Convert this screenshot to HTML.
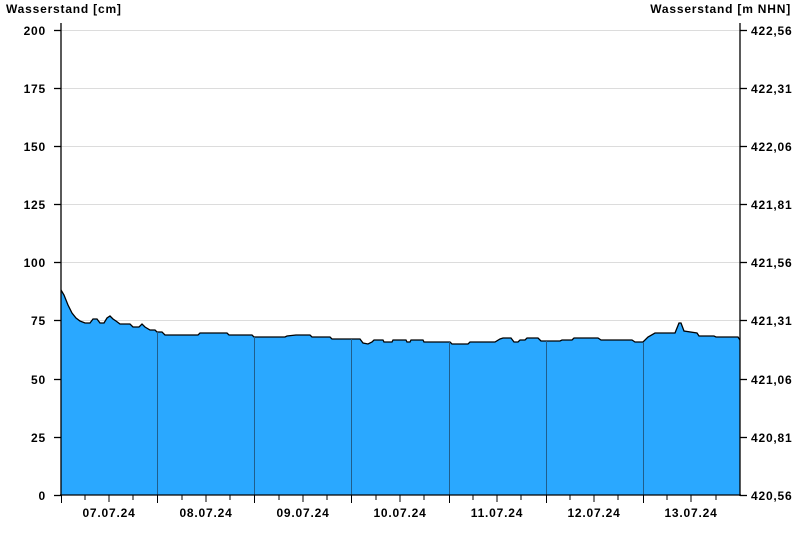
<!DOCTYPE html>
<html><head><meta charset="utf-8"><style>
html,body{margin:0;padding:0;background:#fff;}
svg{display:block;font-family:"Liberation Sans",Arial,sans-serif;font-weight:bold;font-size:12px;letter-spacing:0.8px;}
</style></head><body>
<svg width="800" height="550" viewBox="0 0 800 550" xmlns="http://www.w3.org/2000/svg">
<text x="6" y="13" fill="#000">Wasserstand [cm]</text>
<text x="791" y="13" fill="#000" text-anchor="end">Wasserstand [m NHN]</text>
<g stroke="#dcdcdc" stroke-width="1">
<line x1="61" y1="30.5" x2="740" y2="30.5"/><line x1="61" y1="88.5" x2="740" y2="88.5"/>
<line x1="61" y1="146.5" x2="740" y2="146.5"/><line x1="61" y1="204.5" x2="740" y2="204.5"/>
<line x1="61" y1="262.5" x2="740" y2="262.5"/><line x1="61" y1="320.5" x2="740" y2="320.5"/>
<line x1="61" y1="379.5" x2="740" y2="379.5"/><line x1="61" y1="437.5" x2="740" y2="437.5"/>
</g>
<polygon fill="#2aa8ff" stroke="none" points="61,290 64,295 68,305 72,313 76,318 80,321 85,323 90,323 93,319 97,319 100,323 104,323 107,318 110,316 113,319 116,321 120,324 130,324 133,327 139,327 142,324 145,327 150,330 155,330 157,332 162,332 165,335 198,335 200,333 227,333 229,335 252,335 254,337 285,337 287,336 296,335 310,335 312,337 330,337 332,339 360,339 363,343 368,344 372,342 374,340 383,340 384,342 392,342 393,340 406,340 407,342 410,342 411,340 423,340 424,342 450,342 452,344 468,344 470,342 495,342 500,339 503,338 511,338 514,342 518,342 520,340 525,340 527,338 538,338 541,341 560,341 562,340 572,340 574,338 598,338 601,340 632,340 635,342 643,342 648,337 655,333 675,333 677,328 679,323 681,323 684,331 697,333 699,336 714,336 716,337 738,337 740,340 740,495 61,495"/>
<polyline fill="none" stroke="#000" stroke-width="1.3" points="61,290 64,295 68,305 72,313 76,318 80,321 85,323 90,323 93,319 97,319 100,323 104,323 107,318 110,316 113,319 116,321 120,324 130,324 133,327 139,327 142,324 145,327 150,330 155,330 157,332 162,332 165,335 198,335 200,333 227,333 229,335 252,335 254,337 285,337 287,336 296,335 310,335 312,337 330,337 332,339 360,339 363,343 368,344 372,342 374,340 383,340 384,342 392,342 393,340 406,340 407,342 410,342 411,340 423,340 424,342 450,342 452,344 468,344 470,342 495,342 500,339 503,338 511,338 514,342 518,342 520,340 525,340 527,338 538,338 541,341 560,341 562,340 572,340 574,338 598,338 601,340 632,340 635,342 643,342 648,337 655,333 675,333 677,328 679,323 681,323 684,331 697,333 699,336 714,336 716,337 738,337 740,340"/>
<g stroke="#1f5e8c" stroke-width="1">
<line x1="157.5" y1="332" x2="157.5" y2="495"/><line x1="254.5" y1="337" x2="254.5" y2="495"/>
<line x1="351.5" y1="339" x2="351.5" y2="495"/><line x1="449.5" y1="342" x2="449.5" y2="495"/>
<line x1="546.5" y1="341" x2="546.5" y2="495"/><line x1="643.5" y1="342" x2="643.5" y2="495"/>
</g>
<g stroke="#000" stroke-width="1.3">
<line x1="61" y1="23" x2="61" y2="496"/><line x1="740" y1="23" x2="740" y2="496"/>
<line x1="60" y1="495" x2="741" y2="495"/>
<line x1="54" y1="30.5" x2="61" y2="30.5"/><line x1="54" y1="88.5" x2="61" y2="88.5"/>
<line x1="54" y1="146.5" x2="61" y2="146.5"/><line x1="54" y1="204.5" x2="61" y2="204.5"/>
<line x1="54" y1="262.5" x2="61" y2="262.5"/><line x1="54" y1="320.5" x2="61" y2="320.5"/>
<line x1="54" y1="379.5" x2="61" y2="379.5"/><line x1="54" y1="437.5" x2="61" y2="437.5"/>
<line x1="54" y1="495.5" x2="61" y2="495.5"/>
<line x1="740" y1="30.5" x2="747" y2="30.5"/><line x1="740" y1="88.5" x2="747" y2="88.5"/>
<line x1="740" y1="146.5" x2="747" y2="146.5"/><line x1="740" y1="204.5" x2="747" y2="204.5"/>
<line x1="740" y1="262.5" x2="747" y2="262.5"/><line x1="740" y1="320.5" x2="747" y2="320.5"/>
<line x1="740" y1="379.5" x2="747" y2="379.5"/><line x1="740" y1="437.5" x2="747" y2="437.5"/>
<line x1="740" y1="495.5" x2="747" y2="495.5"/>
</g>
<g stroke="#000" stroke-width="1">
<line x1="61.5" y1="495" x2="61.5" y2="503"/>
<line x1="85" y1="495" x2="85" y2="500"/><line x1="109" y1="495" x2="109" y2="502"/><line x1="133" y1="495" x2="133" y2="500"/>
<line x1="157.5" y1="495" x2="157.5" y2="503"/>
<line x1="182" y1="495" x2="182" y2="500"/><line x1="206" y1="495" x2="206" y2="502"/><line x1="230" y1="495" x2="230" y2="500"/>
<line x1="254.5" y1="495" x2="254.5" y2="503"/>
<line x1="279" y1="495" x2="279" y2="500"/><line x1="303" y1="495" x2="303" y2="502"/><line x1="327" y1="495" x2="327" y2="500"/>
<line x1="351.5" y1="495" x2="351.5" y2="503"/>
<line x1="376" y1="495" x2="376" y2="500"/><line x1="400" y1="495" x2="400" y2="502"/><line x1="424" y1="495" x2="424" y2="500"/>
<line x1="449.5" y1="495" x2="449.5" y2="503"/>
<line x1="473" y1="495" x2="473" y2="500"/><line x1="497" y1="495" x2="497" y2="502"/><line x1="521" y1="495" x2="521" y2="500"/>
<line x1="546.5" y1="495" x2="546.5" y2="503"/>
<line x1="570" y1="495" x2="570" y2="500"/><line x1="594" y1="495" x2="594" y2="502"/><line x1="618" y1="495" x2="618" y2="500"/>
<line x1="643.5" y1="495" x2="643.5" y2="503"/>
<line x1="667" y1="495" x2="667" y2="500"/><line x1="691" y1="495" x2="691" y2="502"/><line x1="716" y1="495" x2="716" y2="500"/>
</g>
<g fill="#000" text-anchor="end">
<text x="46" y="35">200</text><text x="46" y="93">175</text><text x="46" y="151">150</text>
<text x="46" y="209">125</text><text x="46" y="267">100</text><text x="46" y="325">75</text>
<text x="46" y="384">50</text><text x="46" y="442">25</text><text x="46" y="500">0</text>
</g>
<g fill="#000">
<text x="751" y="35">422,56</text><text x="751" y="93">422,31</text><text x="751" y="151">422,06</text>
<text x="751" y="209">421,81</text><text x="751" y="267">421,56</text><text x="751" y="325">421,31</text>
<text x="751" y="384">421,06</text><text x="751" y="442">420,81</text><text x="751" y="500">420,56</text>
</g>
<g fill="#000" text-anchor="middle">
<text x="109" y="517">07.07.24</text><text x="206" y="517">08.07.24</text><text x="303" y="517">09.07.24</text>
<text x="400" y="517">10.07.24</text><text x="497" y="517">11.07.24</text><text x="594" y="517">12.07.24</text>
<text x="691" y="517">13.07.24</text>
</g>
</svg>
</body></html>
